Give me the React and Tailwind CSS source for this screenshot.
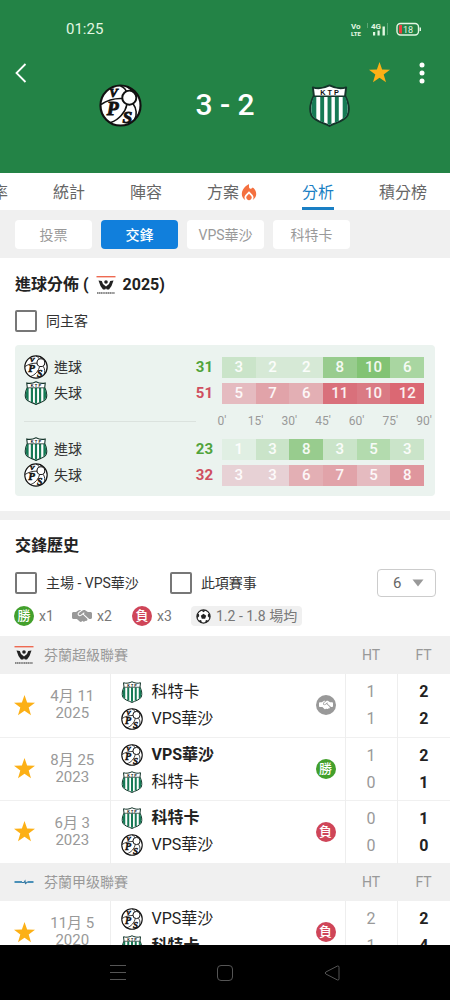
import React from "react";
import { FaHandshakeSimple } from "react-icons/fa6";
import { MdLocalFireDepartment } from "react-icons/md";

const VPS = "VPS華沙";
const KTP = "科特卡";

function VpsLogo({ className }) {
  return (
    <svg viewBox="0 0 44 44" className={className} aria-hidden="true">
      <circle cx="22" cy="22" r="20.5" fill="#fff" stroke="#111" strokeWidth="2.2" />
      <g fill="none" stroke="#111" strokeWidth="1.6">
        <path d="M2 21C8 17 16 14.500 24.500 15" />
        <path d="M12 39.500C20 37 27 29 28.500 21" />
        <path d="M22 2C26 3.500 27.500 5.500 28 8" />
        <path d="M37 10C34.500 7.500 32 4.500 29 3" />
        <path d="M35 20.500C38.500 25 39 32 36.500 36" />
        <circle cx="31" cy="14" r="7.200" fill="#fff" strokeWidth="2" />
      </g>
      <g fontFamily="Liberation Serif, serif" fontWeight="700" fontStyle="italic" fill="#111" stroke="#111" strokeWidth="0.9">
        <text x="10.500" y="13.500" fontSize="13">V</text>
        <text x="8" y="32" fontSize="20">P</text>
        <text x="24" y="39.500" fontSize="18">S</text>
      </g>
    </svg>
  );
}

function KtpLogo({ className }) {
  return (
    <svg viewBox="0 0 44 44" className={className} aria-hidden="true">
      <path
        d="M5 3.500C11 5.500 17 4 22 1.500C27 4 33 5.500 39 3.500L38 12C41 18 43 26 40.500 32C37 38.500 28 39.500 22 43C16 39.500 7 38.500 3.500 32C1 26 3 18 6 12Z"
        fill="#fff"
        stroke="#14342a"
        strokeWidth="2"
        strokeLinejoin="round"
      />
      <g fill="#167a55">
        <path d="M6 13H8.500V36C5.500 34.500 4 32 3.500 29C3 23 4 17 6 13Z" />
        <path d="M12.500 13H16.500V39.500L12.500 38Z" />
        <path d="M20 13H24V41L22 42L20 41Z" />
        <path d="M27.500 13H31.500V38L27.500 39.500Z" />
        <path d="M35.500 13H38C40 17 41 23 40.500 29C40 32 38.500 34.500 35.500 36Z" />
      </g>
      <path d="M6 12.500H38" stroke="#14342a" strokeWidth="1.500" />
      <text x="22" y="11" textAnchor="middle" fontSize="7.500" fontWeight="700" fontFamily="Liberation Sans, sans-serif" fill="#111">
        K T P
      </text>
    </svg>
  );
}

function VeikkausliigaLogo({ className }) {
  return (
    <svg viewBox="0 0 20 20" className={className} aria-hidden="true">
      <rect x="0.500" y="1" width="19" height="1.400" fill="#ee6a52" />
      <circle cx="10" cy="7" r="1.800" fill="#222" />
      <path d="M2.500 5.500L5.800 6L7 9L10 11.500L13 9L14.200 6L17.500 5.500L15.500 11L13 14.500H10.800L10 13.300L9.200 14.500H7L4.500 11Z" fill="#222" />
      <path d="M1 18h18" stroke="#666" strokeWidth="1.600" strokeDasharray="1.400 0.400" />
    </svg>
  );
}

function YkkonenLogo({ className }) {
  return (
    <svg viewBox="0 0 20 20" className={className} aria-hidden="true">
      <path d="M0.500 10H8M13.500 10H19.500" stroke="#4a90b8" strokeWidth="1.800" />
      <path d="M8 10.500H10L11 9L11.500 11.500L13.500 10" fill="none" stroke="#3679a3" strokeWidth="1.200" />
    </svg>
  );
}

function Star({ className }) {
  return (
    <svg viewBox="0 0 20 20" className={className} fill="#fcb016" aria-hidden="true">
      <path d="M10 0L12.500 7.200L20 7.400L14 12L16.200 19.300L10 15L3.800 19.300L6 12L0 7.400L7.500 7.200Z" />
    </svg>
  );
}

function Football({ className }) {
  return (
    <svg viewBox="0 0 20 20" className={className} aria-hidden="true">
      <circle cx="10" cy="10" r="8.800" fill="#fff" stroke="#222" strokeWidth="1.600" />
      <g fill="#222">
        <path d="M10 6.300L13.600 8.900L12.200 13.100H7.800L6.400 8.900Z" />
        <path d="M6.800 1.800H13.200L10 4.200Z" />
        <path d="M1.300 7L4 6.500L4.300 9.800L1.600 12.200Z" />
        <path d="M18.700 7L16 6.500L15.700 9.800L18.400 12.200Z" />
        <path d="M3.800 15.400L6.800 14.800L8 18.400L6 18Z" />
        <path d="M16.200 15.400L13.200 14.800L12 18.400L14 18Z" />
      </g>
    </svg>
  );
}

function TeamLogo({ team, className }) {
  return team === VPS ? <VpsLogo className={className} /> : <KtpLogo className={className} />;
}

function StatusBar() {
  return (
    <div className="flex h-[58px] items-center justify-between pr-[27px] pl-[66px] text-[#e2f7e2]">
      <span className="text-[15px]">01:25</span>
      <svg viewBox="0 0 74 16" className="h-4 w-[74px]" aria-hidden="true" fill="#e2f7e2" fontFamily="Roboto, sans-serif">
        <text x="2" y="7.500" fontSize="8" fontWeight="700">Vo</text>
        <text x="2" y="14.500" fontSize="6" fontWeight="900">LTE</text>
        <text x="22" y="8" fontSize="8" fontWeight="700">4G</text>
        <path d="M24 11h2.200v3.500H24zM28.500 9.500h2.200v5h-2.200zM33.500 5.500h2.400v9h-2.400z" />
        <path d="M38 2h1v12h-1zM18 2h1v5h-1z" opacity=".3" />
        <rect x="48" y="2.500" width="21.500" height="11.500" rx="3.500" fill="none" stroke="#e2f7e2" strokeWidth="1.400" />
        <path d="M50 5a1 1 0 0 1 1-1h2v8.500h-2a1 1 0 0 1-1-1z" fill="#ee3d3d" />
        <path d="M70.500 6.500h1.500v3.500h-1.500z" />
        <text x="54" y="11.500" fontSize="9">18</text>
      </svg>
    </div>
  );
}

function Header() {
  return (
    <header className="shrink-0 bg-[#238346] pb-[46px] text-white">
      <StatusBar />
      <div className="flex h-[25px] items-center justify-between pt-1 pr-[18px] pl-[14px]">
        <button type="button" aria-label="返回">
          <svg viewBox="0 0 14 20" className="h-5 w-3.5" fill="none" stroke="#fff" strokeWidth="1.800">
            <path d="M11.500 1L2.500 10L11.500 19" />
          </svg>
        </button>
        <div className="flex items-center gap-[22px]">
          <button type="button" aria-label="收藏">
            <Star className="size-[21px]" />
          </button>
          <button type="button" aria-label="更多">
            <svg viewBox="0 0 20 24" className="h-6 w-5" fill="#fff">
              <circle cx="10" cy="4" r="2.500" />
              <circle cx="10" cy="12" r="2.500" />
              <circle cx="10" cy="20" r="2.500" />
            </svg>
          </button>
        </div>
      </div>
      <div className="flex items-center justify-center gap-[53px]">
        <VpsLogo className="size-[43px]" />
        <span className="text-[30px] leading-[44px] font-medium">3 - 2</span>
        <KtpLogo className="size-[43px]" />
      </div>
    </header>
  );
}

const TABS = ["賠率", "統計", "陣容", "方案", "分析", "積分榜"];

function Tabs() {
  return (
    <nav className="flex h-[37px] shrink-0 gap-[45px] overflow-hidden bg-white text-[16px] whitespace-nowrap text-[#666]">
      {TABS.map((tab, i) => (
        <a
          key={tab}
          href="#"
          className={
            tab === "分析"
              ? "flex items-center border-b-[3px] border-[#1a7fc4] pt-[6px] text-[#1a7fc4]"
              : i === 0
                ? "-ml-6 flex items-center pt-[3px]"
                : "flex items-center gap-0.5 pt-[3px]"
          }
        >
          {tab}
          {tab === "方案" && <MdLocalFireDepartment viewBox="3.5 2 17 20" className="h-[18px] w-4 text-[#f4703f]" />}
        </a>
      ))}
    </nav>
  );
}

function SubTabs() {
  return (
    <div className="flex gap-[9px] bg-[#f0f0f0] px-[15px] pt-[10px] pb-[9px] text-[14px]">
      {["投票", "交鋒", VPS, KTP].map((name) => (
        <button
          key={name}
          type="button"
          className={
            name === "交鋒"
              ? "h-[29px] w-[77px] rounded bg-[#117fdc] pt-0.5 font-medium text-white"
              : "h-[29px] w-[77px] rounded bg-white pt-0.5 text-[#999]"
          }
        >
          {name}
        </button>
      ))}
    </div>
  );
}

function Check({ label }) {
  return (
    <label className="flex items-center gap-[9px] text-[14px] text-[#333]">
      <input type="checkbox" className="size-[22px] appearance-none rounded-[2px] border-2 border-[#777] bg-white checked:bg-[#117fdc]" />
      {label}
    </label>
  );
}

const GREEN = {
  1: "bg-[#e0efe3]",
  2: "bg-[#d6e9d6]",
  3: "bg-[#cae4c9]",
  5: "bg-[#b3dbae]",
  6: "bg-[#a9d6a1]",
  8: "bg-[#98cc8e]",
  10: "bg-[#82c374]",
};
const RED = {
  3: "bg-[#e7d1d5]",
  5: "bg-[#e5bbc0]",
  6: "bg-[#e3afb4]",
  7: "bg-[#e1a3a9]",
  8: "bg-[#df969d]",
  10: "bg-[#da7a84]",
  11: "bg-[#d9707b]",
  12: "bg-[#db6873]",
};

function GoalRow({ team, label, total, values }) {
  const scored = label === "進球";
  const shades = scored ? GREEN : RED;
  return (
    <div className="grid h-[26px] grid-cols-[99fr_101fr] items-center">
      <div className="flex items-center gap-1.5 pr-[9px] text-[14px] text-[#333]">
        <TeamLogo team={team} className="size-6" />
        {label}
        <span className={scored ? "ml-auto text-[15px] font-bold text-[#51a33b]" : "ml-auto text-[15px] font-bold text-[#cf4f60]"}>
          {total}
        </span>
      </div>
      <div className="grid grid-cols-6 text-center text-[15px] leading-[21px] font-medium text-white/90">
        {values.map((v, i) => (
          <span key={i} className={shades[v]}>
            {v}
          </span>
        ))}
      </div>
    </div>
  );
}

function GoalDistribution() {
  return (
    <section className="bg-white px-[15px] pt-[15px] pb-[15px]">
      <h2 className="flex items-center text-[16px] leading-6 font-bold text-[#222]">
        進球分佈 (<VeikkausliigaLogo className="mx-[7px] size-5" />
        2025)
      </h2>
      <div className="my-[13px]">
        <Check label="同主客" />
      </div>
      <div className="rounded bg-[#ebf3ef] pt-[9px] pr-[11px] pb-2 pl-[9px]">
        <GoalRow team={VPS} label="進球" total={31} values={[3, 2, 2, 8, 10, 6]} />
        <GoalRow team={KTP} label="失球" total={51} values={[5, 7, 6, 11, 10, 12]} />
        <div className="grid h-[30px] grid-cols-[99fr_101fr] items-center">
          <div className="mr-[26px] h-px bg-[#dbe2de]" />
          <div className="flex justify-between text-[12px] text-[#999]">
            {["0'", "15'", "30'", "45'", "60'", "75'", "90'"].map((m) => (
              <span key={m} className="flex w-0 justify-center">
                {m}
              </span>
            ))}
          </div>
        </div>
        <GoalRow team={KTP} label="進球" total={23} values={[1, 3, 8, 3, 5, 3]} />
        <GoalRow team={VPS} label="失球" total={32} values={[3, 3, 6, 7, 5, 8]} />
      </div>
    </section>
  );
}

function ResultBadge({ result }) {
  if (result === "和") {
    return (
      <span className="flex size-5 shrink-0 items-center justify-center rounded-full bg-[#999] text-white">
        <FaHandshakeSimple className="size-3.5" />
      </span>
    );
  }
  return (
    <span
      className={
        result === "勝"
          ? "flex size-5 shrink-0 items-center justify-center rounded-full bg-[#43a02c] text-[13px] leading-5 font-medium text-white"
          : "flex size-5 shrink-0 items-center justify-center rounded-full bg-[#cf4558] text-[13px] leading-5 font-medium text-white"
      }
    >
      {result}
    </span>
  );
}

function LeagueHeader({ logo, name }) {
  return (
    <tr className="h-[38px] bg-[#f0f0f0] text-[14px] text-[#999]">
      <th colSpan={3} className="py-0 pl-[14px] text-left font-normal">
        <span className="flex items-center gap-[10px]">
          {logo}
          {name}
        </span>
      </th>
      <th className="font-normal">HT</th>
      <th className="font-normal">FT</th>
    </tr>
  );
}

function MatchRow({ date, year, teams, winner, result, ht, ft }) {
  return (
    <tr className="h-[63px] border-b border-[#f0f0f0]">
      <td>
        <button type="button" aria-label="收藏" className="mx-auto block">
          <Star className="size-[21px]" />
        </button>
      </td>
      <td className="border-r border-[#eee] pr-[13px] text-center text-[15px] leading-[17px] text-[#999]">
        {date}
        <br />
        {year}
      </td>
      <td className="border-r border-[#eee] pr-[9px] pl-[10px] text-[16px] text-[#222]">
        <div className="flex items-center justify-between">
          <div>
            {teams.map((t) => (
              <div key={t} className={t === winner ? "flex h-[27px] items-center gap-[9px] font-bold" : "flex h-[27px] items-center gap-[9px]"}>
                <TeamLogo team={t} className="size-[22px]" />
                {t}
              </div>
            ))}
          </div>
          <ResultBadge result={result} />
        </div>
      </td>
      <td className="border-r border-[#eee] text-center text-[16px] leading-[27px] text-[#999]">
        {ht[0]}
        <br />
        {ht[1]}
      </td>
      <td className="text-center text-[16px] leading-[27px] font-bold text-[#222]">
        {ft[0]}
        <br />
        {ft[1]}
      </td>
    </tr>
  );
}

function History() {
  return (
    <section className="bg-white pt-[14px]">
      <h2 className="px-[15px] text-[16px] leading-6 font-bold text-[#222]">交鋒歷史</h2>
      <div className="mt-[11px] flex items-center pr-[14px] pl-[15px]">
        <Check label="主場 - VPS華沙" />
        <div className="ml-[31px]">
          <Check label="此項賽事" />
        </div>
        <div className="relative ml-auto">
          <select aria-label="場數" className="h-7 w-[59px] appearance-none rounded border border-[#ccc] bg-white pl-[15px] text-[15px] text-[#666]" defaultValue="6">
            <option>6</option>
            <option>10</option>
          </select>
          <svg viewBox="0 0 12 8" className="pointer-events-none absolute top-[10px] right-3 h-2 w-3" fill="#999">
            <path d="M0.500 0.500h11L6 7.500z" />
          </svg>
        </div>
      </div>
      <div className="mt-[9px] flex h-5 items-center px-[14px] text-[14px] text-[#777]">
        <span className="flex w-[58px] items-center gap-[5px]">
          <ResultBadge result="勝" />
          x1
        </span>
        <span className="flex w-[60px] items-center gap-[5px]">
          <FaHandshakeSimple className="size-5 text-[#999]" />
          x2
        </span>
        <span className="flex w-[59px] items-center gap-[5px]">
          <ResultBadge result="負" />
          x3
        </span>
        <span className="flex items-center gap-[5px] rounded-sm bg-[#f0f0f0] pr-[5px] pl-[5px] leading-5">
          <Football className="size-[15px]" />
          1.2 - 1.8 場均
        </span>
      </div>
      <table className="mt-[10px] w-full table-fixed border-collapse">
        <colgroup>
          <col className="w-12" />
          <col className="w-[62px]" />
          <col />
          <col className="w-[52px]" />
          <col className="w-[53px]" />
        </colgroup>
        <tbody>
          <LeagueHeader logo={<VeikkausliigaLogo className="size-5" />} name="芬蘭超級聯賽" />
          <MatchRow date="4月 11" year="2025" teams={[KTP, VPS]} result="和" ht={[1, 1]} ft={[2, 2]} />
          <MatchRow date="8月 25" year="2023" teams={[VPS, KTP]} winner={VPS} result="勝" ht={[1, 0]} ft={[2, 1]} />
          <MatchRow date="6月 3" year="2023" teams={[KTP, VPS]} winner={KTP} result="負" ht={[0, 0]} ft={[1, 0]} />
          <LeagueHeader logo={<YkkonenLogo className="size-5" />} name="芬蘭甲级聯賽" />
          <MatchRow date="11月 5" year="2020" teams={[VPS, KTP]} winner={KTP} result="負" ht={[2, 1]} ft={[2, 4]} />
        </tbody>
      </table>
    </section>
  );
}

function SystemNav() {
  return (
    <footer className="flex h-[55px] shrink-0 items-center justify-center gap-[91px] bg-black">
      <button type="button" aria-label="選單">
        <svg viewBox="0 0 16 16" className="size-4" stroke="#555" strokeWidth="1">
          <path d="M0 0.500h16M0 7.500h16M0 14.500h16" />
        </svg>
      </button>
      <button type="button" aria-label="主頁">
        <svg viewBox="0 0 16 16" className="size-4" fill="none" stroke="#555">
          <rect x="0.500" y="0.500" width="15" height="15" rx="3.500" />
        </svg>
      </button>
      <button type="button" aria-label="返回上頁">
        <svg viewBox="0 0 16 16" className="size-4" fill="none" stroke="#555" strokeLinejoin="round">
          <path d="M13.500 1L1.800 7Q0.500 8 1.800 9L13.500 15Q15 15.300 15 13.800V2.200Q15 0.700 13.500 1Z" />
        </svg>
      </button>
    </footer>
  );
}

export default function App() {
  return (
    <div className="flex h-screen flex-col bg-white font-[Roboto,'Noto_Sans_CJK_TC',sans-serif]">
      <Header />
      <Tabs />
      <main className="min-h-0 flex-1 overflow-hidden">
        <SubTabs />
        <GoalDistribution />
        <div className="h-[9px] bg-[#f0f0f0]" />
        <History />
      </main>
      <SystemNav />
    </div>
  );
}
